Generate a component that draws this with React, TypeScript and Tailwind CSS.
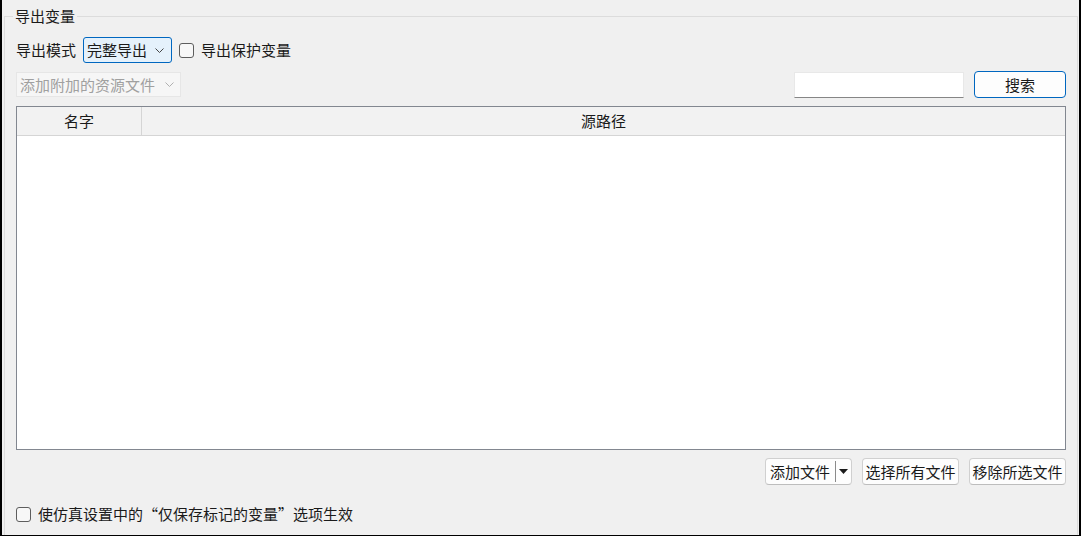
import { useState } from "react";

function Chevron({ color }: { color: string }) {
  return (
    <svg width="9" height="5" viewBox="0 0 9 5" fill="none">
      <path d="M0.5 0.5L4.5 4.5L8.5 0.5" stroke={color} strokeWidth="1" />
    </svg>
  );
}

function CheckBox({ label }: { label: string }) {
  const [checked, setChecked] = useState(false);
  return (
    <label className="flex items-center gap-[7px] cursor-default" onClick={() => setChecked(!checked)}>
      <span className="w-[15px] h-[15px] rounded-[3px] border border-[#5d5d5d] bg-[#f7f7f7] flex items-center justify-center text-[10px]">
        {checked ? "✓" : ""}
      </span>
      <span>{label}</span>
    </label>
  );
}

function Button({ children, width, primary }: { children: React.ReactNode; width: string; primary?: boolean }) {
  return (
    <button
      className={
        "h-[27px] rounded-[4px] bg-[#fdfdfd] flex items-center justify-center border " +
        (primary ? "border-[#0067c0] " : "border-[#d0d0d0] border-b-[#bdbdbd] ") +
        width
      }
    >
      {children}
    </button>
  );
}

export default function App() {
  return (
    <div
      className="w-[1081px] h-[536px] bg-[#f0f0f0] border-l-2 border-r-2 border-b border-black overflow-hidden text-[15px] leading-[20px] text-[#1a1a1a]"
      style={{ fontFamily: '"Microsoft YaHei", "Noto Sans CJK SC", sans-serif' }}
    >
      <div className="relative mt-[16px] ml-[2px] mr-[1px] h-[600px] border-t border-l border-r border-[#dcdcdc] pl-[11px] pr-[11px] pt-[20px]">
        <span className="absolute left-[8px] -top-[11px] px-[2px] bg-[#f0f0f0]">导出变量</span>

        {/* mode row */}
        <div className="flex items-center h-[26px]">
          <span className="mr-[7px]">导出模式</span>
          <div className="w-[89px] h-[26px] rounded-[3px] border border-[#0067c0] bg-[#e5f1fb] flex items-center pl-[3px] pr-[7px] justify-between mr-[7px]">
            <span>完整导出</span>
            <Chevron color="#444" />
          </div>
          <CheckBox label="导出保护变量" />
        </div>

        {/* resource + search row */}
        <div className="flex items-center h-[27px] mt-[8px]">
          <div className="w-[165px] h-[25px] border border-[#e6e6e6] bg-[#f6f6f6] flex items-center justify-between pl-[3px] pr-[6px] text-[#a0a0a0]">
            <span>添加附加的资源文件</span>
            <Chevron color="#b0b0b0" />
          </div>
          <div className="flex-1" />
          <input className="w-[170px] h-[26px] bg-white border border-[#e8e8e8] border-b-[#868686] outline-none px-1" />
          <div className="w-[10px]" />
          <Button width="w-[92px]" primary>
            搜索
          </Button>
        </div>

        {/* table */}
        <div className="mt-[8px] h-[344px] border border-[#828790] bg-white flex flex-col">
          <div className="flex h-[29px] bg-[#f2f2f2] border-b border-[#d5d5d5]">
            <div className="w-[125px] border-r border-[#d5d5d5] flex items-center justify-center">名字</div>
            <div className="flex-1 flex items-center justify-center">源路径</div>
          </div>
          <div className="flex-1" />
        </div>

        {/* action buttons */}
        <div className="flex justify-end gap-[10px] mt-[8px]">
          <div className="w-[87px] h-[27px] rounded-[4px] bg-[#fdfdfd] border border-[#d0d0d0] border-b-[#bdbdbd] flex items-center">
            <span className="pl-[4px] pr-[5px]">添加文件</span>
            <span className="w-px h-[21px] bg-[#8a8a8a]" />
            <svg className="ml-[3px]" width="9" height="5" viewBox="0 0 9 5">
              <path d="M0 0H9L4.5 5Z" fill="#1a1a1a" />
            </svg>
          </div>
          <Button width="w-[97px]">选择所有文件</Button>
          <Button width="w-[97px]">移除所选文件</Button>
        </div>

        {/* bottom option */}
        <div className="mt-[20px] h-[18px] flex items-center">
          <CheckBox label="使仿真设置中的“仅保存标记的变量”选项生效" />
        </div>
      </div>
    </div>
  );
}
